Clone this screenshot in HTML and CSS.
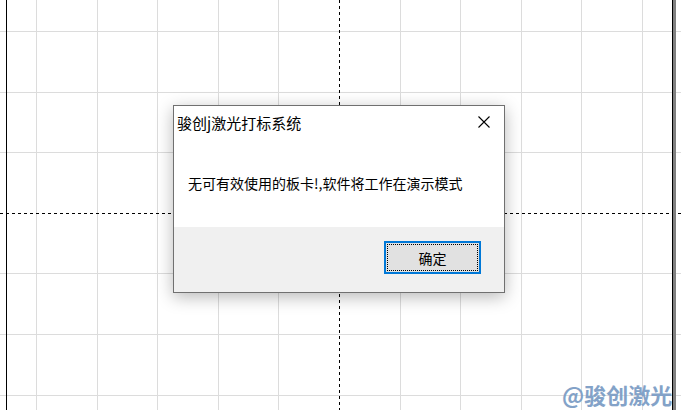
FILE: index.html
```html
<!DOCTYPE html>
<html lang="zh-CN">
<head>
<meta charset="utf-8">
<title>骏创j激光打标系统</title>
<link rel="stylesheet" href="styles.css">
</head>
<body>
<div class="canvas">
  <svg class="grid" width="681" height="410" viewBox="0 0 681 410" shape-rendering="crispEdges">
    <g fill="#dcdcdc">
      <rect x="36" y="0" width="1" height="410"/>
      <rect x="97" y="0" width="1" height="410"/>
      <rect x="157" y="0" width="1" height="410"/>
      <rect x="218" y="0" width="1" height="410"/>
      <rect x="278" y="0" width="1" height="410"/>
      <rect x="400" y="0" width="1" height="410"/>
      <rect x="460" y="0" width="1" height="410"/>
      <rect x="521" y="0" width="1" height="410"/>
      <rect x="581" y="0" width="1" height="410"/>
      <rect x="642" y="0" width="1" height="410"/>
      <rect x="0" y="31" width="681" height="1"/>
      <rect x="0" y="92" width="681" height="1"/>
      <rect x="0" y="152" width="681" height="1"/>
      <rect x="0" y="273" width="681" height="1"/>
      <rect x="0" y="334" width="681" height="1"/>
      <rect x="0" y="395" width="681" height="1"/>
    </g>
    <line x1="339.5" y1="0" x2="339.5" y2="410" stroke="#000" stroke-width="1" stroke-dasharray="3 3"/>
    <line x1="0" y1="213.5" x2="681" y2="213.5" stroke="#000" stroke-width="1" stroke-dasharray="3 3"/>
    <rect x="6" y="0" width="1" height="410" fill="#000"/>
    <rect x="672" y="0" width="1" height="410" fill="#000"/>
    <rect x="673" y="0" width="3" height="410" fill="#808080"/>
  </svg>

  <div class="dialog">
    <div class="titlebar">
      <span class="title">骏创j激光打标系统</span>
      <span class="close">
        <svg width="12" height="12" viewBox="0 0 12 12"><path d="M0.5 0.5 L11.5 11.5 M11.5 0.5 L0.5 11.5" stroke="#000" stroke-width="1.1" fill="none"/></svg>
      </span>
    </div>
    <div class="body">
      <p class="message">无可有效使用的板卡!,软件将工作在演示模式</p>
    </div>
    <div class="footer">
      <button class="btn">确定</button>
    </div>
  </div>

  <div class="watermark">@骏创激光</div>
</div>
</body>
</html>
```
FILE: styles.css
```css
html, body {
  margin: 0;
  padding: 0;
  background: #ffffff;
}
body {
  width: 681px;
  height: 410px;
  overflow: hidden;
  font-family: "Noto Sans CJK SC", "Noto Sans", sans-serif;
}
.canvas {
  position: relative;
  width: 681px;
  height: 410px;
  background: #fff;
}
.grid {
  position: absolute;
  left: 0;
  top: 0;
  display: block;
}
.dialog {
  position: absolute;
  left: 173px;
  top: 105px;
  width: 330px;
  height: 186px;
  border: 1px solid #707070;
  background: #fff;
  box-shadow: 0 4px 16px rgba(0, 0, 0, 0.28);
  display: flex;
  flex-direction: column;
}
.titlebar {
  height: 32px;
  display: flex;
  align-items: center;
  justify-content: space-between;
  padding-left: 3px;
}
.title {
  font-size: 15px;
  line-height: 20px;
  color: #000;
  margin-top: 1px;
}
.close {
  width: 40px;
  height: 32px;
  display: flex;
  align-items: center;
  justify-content: center;
  margin-top: -1px;
}
.close svg {
  display: block;
}
.body {
  flex: 1;
  display: flex;
  align-items: flex-start;
  padding: 36px 0 0 14px;
}
.message {
  margin: 0;
  font-size: 14px;
  line-height: 18px;
  color: #000;
}
.footer {
  height: 65px;
  background: #f0f0f0;
  display: flex;
  justify-content: flex-end;
  align-items: flex-start;
  padding: 14px 23px 0 0;
  box-sizing: border-box;
}
.btn {
  position: relative;
  width: 97px;
  height: 33px;
  box-sizing: border-box;
  border: 2px solid #0078d7;
  background: #e1e1e1;
  font-family: "Noto Sans CJK SC", "Noto Sans", sans-serif;
  font-size: 14px;
  line-height: 18px;
  color: #000;
  padding: 0;
  margin: 0;
}
.btn::after {
  content: "";
  position: absolute;
  left: 1px;
  top: 1px;
  right: 1px;
  bottom: 1px;
  border: 1px dotted #000;
}
.watermark {
  position: absolute;
  left: 562px;
  top: 379px;
  font-size: 22px;
  line-height: 30px;
  font-weight: 700;
  color: #7d9ec6;
  opacity: 0.95;
  letter-spacing: 0;
}
```
